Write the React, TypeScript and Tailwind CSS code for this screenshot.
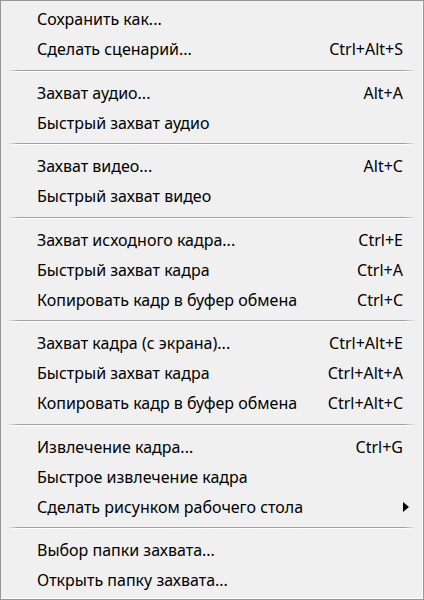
import React from 'react'

type Item = { label: string; shortcut?: string; submenu?: boolean }

const groups: Item[][] = [
  [
    { label: 'Сохранить как...' },
    { label: 'Сделать сценарий...', shortcut: 'Ctrl+Alt+S' },
  ],
  [
    { label: 'Захват аудио...', shortcut: 'Alt+A' },
    { label: 'Быстрый захват аудио' },
  ],
  [
    { label: 'Захват видео...', shortcut: 'Alt+C' },
    { label: 'Быстрый захват видео' },
  ],
  [
    { label: 'Захват исходного кадра...', shortcut: 'Ctrl+E' },
    { label: 'Быстрый захват кадра', shortcut: 'Ctrl+A' },
    { label: 'Копировать кадр в буфер обмена', shortcut: 'Ctrl+C' },
  ],
  [
    { label: 'Захват кадра (с экрана)...', shortcut: 'Ctrl+Alt+E' },
    { label: 'Быстрый захват кадра', shortcut: 'Ctrl+Alt+A' },
    { label: 'Копировать кадр в буфер обмена', shortcut: 'Ctrl+Alt+C' },
  ],
  [
    { label: 'Извлечение кадра...', shortcut: 'Ctrl+G' },
    { label: 'Быстрое извлечение кадра' },
    { label: 'Сделать рисунком рабочего стола', submenu: true },
  ],
  [
    { label: 'Выбор папки захвата...' },
    { label: 'Открыть папку захвата...' },
  ],
]

function MenuRow({ item }: { item: Item }) {
  return (
    <div className="relative flex h-[30px] items-center pl-[36px] pr-[19px]">
      <span className="flex-1 whitespace-nowrap">{item.label}</span>
      {item.shortcut && <span className="whitespace-nowrap">{item.shortcut}</span>}
      {item.submenu && (
        <svg className="absolute right-[13px] top-[10px]" width="6" height="10" viewBox="0 0 6 10">
          <path d="M0 0 L6 5 L0 10 Z" fill="#000" />
        </svg>
      )}
    </div>
  )
}

function Separator() {
  return (
    <div className="flex h-[13.5px] flex-col justify-center px-[6px]">
      <div className="h-px bg-[linear-gradient(to_right,transparent,#a0a0a0_3%,#a0a0a0_97%,transparent)]" />
      <div className="h-px bg-[linear-gradient(to_right,transparent,#ffffff_3%,#ffffff_97%,transparent)]" />
    </div>
  )
}

export default function App() {
  return (
    <div className="h-[600px] w-[424px] border border-[#979797] bg-[#f0f0f0]">
      <div
        className="h-full border-b border-r border-white pt-[3px] text-[16px] text-black"
        style={{ fontFamily: '"Noto Sans", "Open Sans", sans-serif' }}
      >
        {groups.map((g, gi) => (
          <React.Fragment key={gi}>
            {gi > 0 && <Separator />}
            {g.map((it, i) => (
              <MenuRow key={i} item={it} />
            ))}
          </React.Fragment>
        ))}
      </div>
    </div>
  )
}
